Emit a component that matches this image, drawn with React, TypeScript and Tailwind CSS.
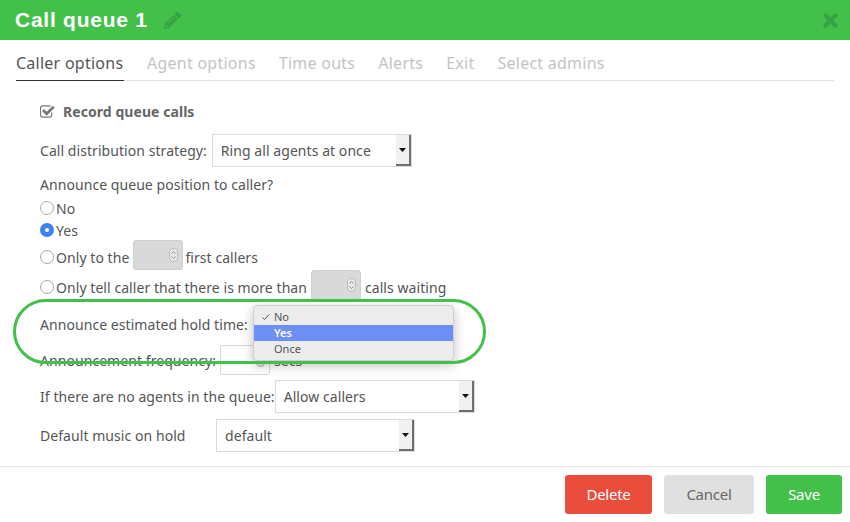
import React from "react";
import { FaPencilAlt } from "react-icons/fa";

function Select({ label, w }: { label: string; w: string }) {
  return (
    <div className={`flex h-[33px] ${w} border border-[#dcdcdc] bg-white text-[#555]`}>
      <span className="flex-1 pl-2 leading-[31px]">{label}</span>
      <span className="flex w-[15px] items-center justify-center bg-[#f1f1f1] border-r-2 border-b-2 border-r-[#6f6f6f] border-b-[#6f6f6f]">
        <svg width="7" height="4" viewBox="0 0 7 4"><path d="M0 0h7L3.5 4z" fill="#111" /></svg>
      </span>
    </div>
  );
}

function Radio({ checked = false }: { checked?: boolean }) {
  return checked ? (
    <span className="flex h-[14px] w-[14px] shrink-0 items-center justify-center rounded-full bg-[#3b82f6]">
      <span className="h-[4px] w-[4px] rounded-full bg-white" />
    </span>
  ) : (
    <span className="h-[14px] w-[14px] shrink-0 rounded-full border border-[#a8a8a8] bg-white" />
  );
}

function Stepper({ disabled = true }: { disabled?: boolean }) {
  return (
    <span className={`relative inline-block h-[30px] w-[50px] rounded-[3px] border ${disabled ? "border-[#cfcfcf] bg-[#d9d9d9]" : "border-[#d5d5d5] bg-white"}`}>
      <span className="absolute right-[4px] top-[7px] flex h-[14px] w-[9px] flex-col items-center justify-center gap-[2px] rounded-[4px] border border-[#bdbdbd] bg-[#e8e8e8]">
        <svg width="5" height="3" viewBox="0 0 5 3"><path d="M.5 2.5 2.5.5l2 2" fill="none" stroke="#777" strokeWidth=".8" /></svg>
        <svg width="5" height="3" viewBox="0 0 5 3"><path d="M.5.5l2 2 2-2" fill="none" stroke="#777" strokeWidth=".8" /></svg>
      </span>
    </span>
  );
}

export default function App() {
  return (
    <div className="relative flex h-[522px] w-[850px] flex-col overflow-hidden bg-white font-['Noto_Sans',sans-serif] text-[14px] tracking-[0.06px] text-[#555]">
      <header className="flex h-10 shrink-0 items-center justify-between bg-[#43c04a] pl-[15px] pr-[12px]">
        <div className="flex items-center gap-[16px]">
          <h1 className="font-['Liberation_Sans',sans-serif] text-[21px] font-bold tracking-[0.75px] text-white">Call queue 1</h1>
          <FaPencilAlt className="h-[17px] w-[17px] text-[#37a146]" />
        </div>
        <svg width="15" height="15" viewBox="0 0 15 15"><path d="M2.5 2.5l10 10M12.5 2.5l-10 10" stroke="#37a146" strokeWidth="4.2" strokeLinecap="round" /></svg>
      </header>

      <nav className="mx-4 mt-[10px] flex h-[31px] shrink-0 gap-[23px] border-b border-[#e2e2e2] text-[16px] tracking-[0.25px] text-[#c4c4c4]">
        <span className="-mb-px w-[108px] border-b border-[#333] leading-[26px] text-[#555]">Caller options</span>
        <span className="leading-[26px]">Agent options</span>
        <span className="leading-[26px]">Time outs</span>
        <span className="leading-[26px]">Alerts</span>
        <span className="leading-[26px]">Exit</span>
        <span className="leading-[26px]">Select admins</span>
      </nav>

      <main className="flex flex-1 flex-col pl-10">
        <div className="mt-[20px] flex h-5 items-center gap-[8px] font-bold text-[#666]">
          <svg width="15" height="13" viewBox="0 128 1720 1408" fill="#777"><path d="M1408 930v318q0 119-84.5 203.5T1120 1536H288q-119 0-203.5-84.5T0 1248V416q0-119 84.5-203.5T288 128h832q63 0 117 25 15 7 18 23 3 17-9 29l-49 49q-10 10-23 10-3 0-9-2-23-6-45-6H288q-66 0-113 47t-47 113v832q0 66 47 113t113 47h832q66 0 113-47t47-113V994q0-13 9-22l64-64q10-10 23-10 6 0 12 3 20 8 20 29zm231-489l-814 814q-24 24-57 24t-57-24L281 825q-24-24-24-57t24-57l110-110q24-24 57-24t57 24l263 263 647-647q24-24 57-24t57 24l110 110q24 24 24 57t-24 57z" /></svg>
          Record queue calls
        </div>
        <div className="mt-[13px] flex items-center gap-[5px]">
          <span>Call distribution strategy:</span>
          <Select label="Ring all agents at once" w="w-[200px]" />
        </div>
        <div className="mt-[8px] h-5 leading-5">Announce queue position to caller?</div>
        <div className="mt-[2px] flex h-[22px] items-center gap-[2px]"><Radio /><span>No</span></div>
        <div className="flex h-[22px] items-center gap-[2px]"><Radio checked /><span>Yes</span></div>
        <div className="mt-[1px] flex h-[30px] items-center gap-[2px]"><Radio /><span>Only to the</span><span className="ml-[2px]"><Stepper /></span><span>first callers</span></div>
        <div className="flex h-[30px] items-center gap-[2px]"><Radio /><span>Only tell caller that there is more than</span><span className="ml-[2px]"><Stepper /></span><span className="ml-[2px]">calls waiting</span></div>
        <div className="mt-[13px] h-5 leading-5">Announce estimated hold time:</div>
        <div className="mt-[10px] flex h-[30px] items-center gap-[4px]"><span>Announcement frequency:</span><Stepper disabled={false} /><span>secs</span></div>
        <div className="mt-[5px] flex items-center"><span>If there are no agents in the queue:</span><Select label="Allow callers" w="w-[200px]" /></div>
        <div className="mt-[6px] flex items-center"><span className="w-[176px]">Default music on hold</span><Select label="default" w="w-[199px]" /></div>
      </main>

      <footer className="flex h-[56px] shrink-0 items-start justify-end gap-3 border-t border-[#e6e6e6] pr-2 pt-2 text-[15px] tracking-[-0.25px]">
        <button className="h-[39px] w-[87px] rounded-[3px] bg-[#eb4d3d] text-white">Delete</button>
        <button className="h-[39px] w-[90px] rounded-[3px] bg-[#e0e0e0] text-[#666]">Cancel</button>
        <button className="h-[39px] w-[76px] rounded-[3px] bg-[#43c04a] text-white">Save</button>
      </footer>

      <div className="absolute left-[253px] top-[305px] w-[201px] rounded-[4px] border border-[#cfcfcf] bg-[#ececec] py-[3px] text-[11px] tracking-normal text-[#555] shadow-[0_4px_12px_rgba(0,0,0,0.25)]">
        <div className="flex h-[16px] items-center pl-[7px]">
          <svg width="10" height="8" viewBox="0 0 10 8"><path d="M1.5 4.5 3.5 6.5 8 1.5" fill="none" stroke="#555" strokeWidth="1" /></svg>
          <span className="ml-[3px]">No</span>
        </div>
        <div className="flex h-[16px] items-center bg-[#6c8ef5] pl-[20px] font-semibold text-white">Yes</div>
        <div className="flex h-[16px] items-center pl-[20px]">Once</div>
      </div>
      <div className="pointer-events-none absolute left-[13px] top-[299px] h-[65px] w-[473px] rounded-[33px] border-[3px] border-[#43c04a]" />
    </div>
  );
}
